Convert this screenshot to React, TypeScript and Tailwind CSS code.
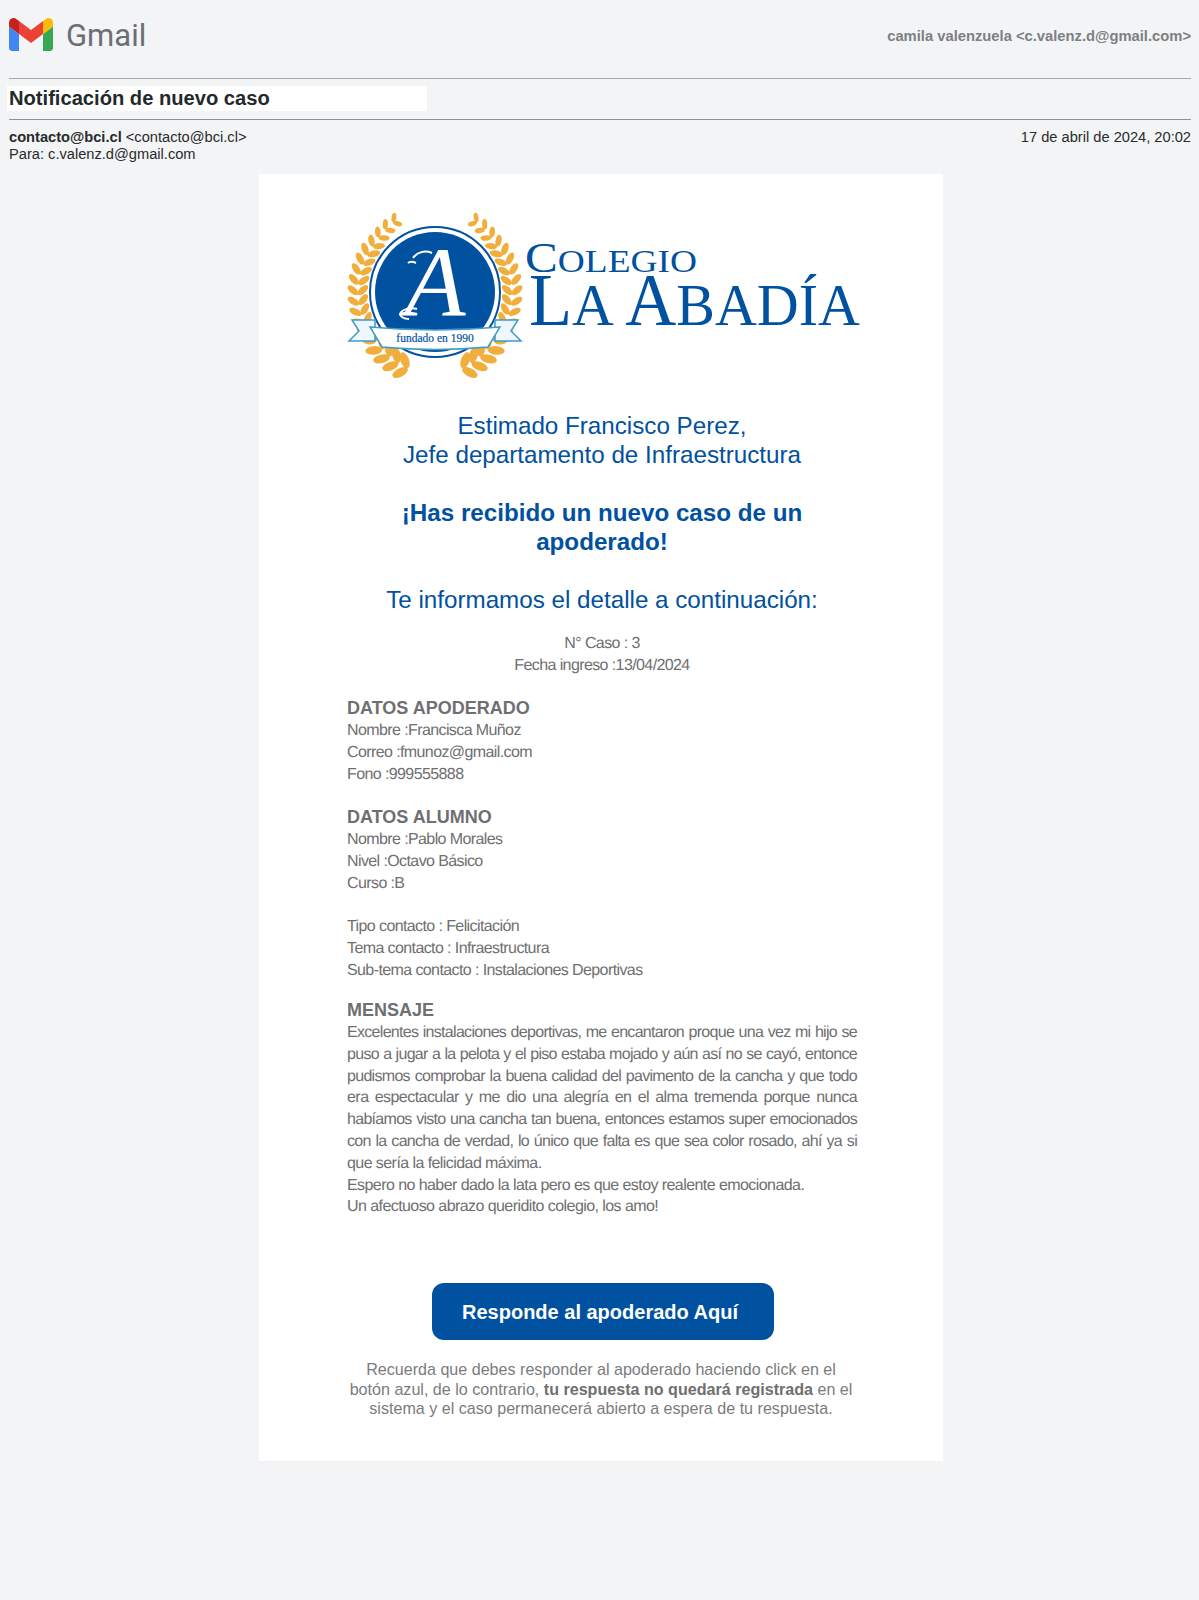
import React from "react";

const blue = "#0051a0";
const gold = "#f2ae3d";

function WreathSide() {
  const cx = 90, cy = 87;
  const pairs: React.ReactNode[] = [];
  for (let i = 0; i < 18; i++) {
    const a = 160 - i * 7.6;
    const t = (a * Math.PI) / 180;
    const rad = 77 + (i < 4 ? 4 - i : 0) + (i > 14 ? (i - 14) * 1.5 : 0);
    const s = i < 4 ? 1.3 : i > 13 ? 1 - (i - 13) * 0.07 : 1;
    pairs.push(
      <g key={i} transform={`translate(${cx + rad * Math.sin(t)} ${cy - rad * Math.cos(t)}) rotate(${a}) scale(${s})`}>
        <ellipse cx={0} cy={0} rx={6.5} ry={3.3} transform="translate(-4 -5) rotate(48)" fill={gold} />
        <ellipse cx={0} cy={0} rx={6.5} ry={3.3} transform="translate(-4 5) rotate(-48)" fill={gold} />
      </g>
    );
  }
  return <g>{pairs}</g>;
}

function Logo() {
  return (
    <svg width="520" height="180" viewBox="0 0 520 180" className="block overflow-visible">
      <WreathSide />
      <g transform="translate(180 0) scale(-1 1)">
        <WreathSide />
      </g>
      <circle cx="90" cy="87" r="65" fill="#fff" stroke={blue} strokeWidth="2" />
      <circle cx="90" cy="87" r="60" fill={blue} />
      <text x="90" y="111" textAnchor="middle" fontFamily="'Liberation Serif', serif" fontSize="100" fontStyle="italic" fill="#fff">A</text>
      <path d="M68 53c4-6 12-8 19-5M71 58c-4-2-6-2-8 0M72 104c-6-2-15 0-17 5 1 3 4 5 9 5" fill="none" stroke="#fff" strokeWidth="2" />
      <path d="M7 115h23v21H4l10-10Z" fill="#eef8fc" stroke="#3f9bc9" strokeWidth="1.5" />
      <path d="M173 115h-23v21h26l-10-10Z" fill="#eef8fc" stroke="#3f9bc9" strokeWidth="1.5" />
      <path d="M25 122l11 6v-6ZM155 122l-11 6v-6Z" fill={blue} />
      <path d="M25 122Q90 128 155 122L143 142Q90 147 37 142Z" fill="#fff" stroke="#3f9bc9" strokeWidth="1.5" />
      <text x="90" y="137" textAnchor="middle" fontFamily="'Liberation Serif', serif" fontSize="11.5" fill={blue} stroke={blue} strokeWidth="0.2">fundado en 1990</text>
      <text x="180" y="67" fontFamily="'Liberation Serif', serif" fontSize="32" fill={blue} textLength="172" lengthAdjust="spacingAndGlyphs">
        <tspan fontSize="42">C</tspan>OLEGIO
      </text>
      <text x="184" y="120" fontFamily="'Liberation Serif', serif" fontSize="60" fill={blue} textLength="331" lengthAdjust="spacingAndGlyphs">
        <tspan fontSize="73">L</tspan>A <tspan fontSize="73">A</tspan>BADÍA
      </text>
    </svg>
  );
}

function Line({ children }: { children: React.ReactNode }) {
  return <p className="h-[22px] text-[16px] leading-[22px] tracking-[-0.6px] [text-rendering:geometricPrecision] text-[#6f6f70] whitespace-nowrap">{children}</p>;
}

function SectionTitle({ children }: { children: React.ReactNode }) {
  return <p className="h-[23px] text-[18px] leading-[22px] font-bold text-[#6f6f70]">{children}</p>;
}

const tight = "block text-justify [text-align-last:justify] tracking-[-0.7px]";
const loose = "block text-justify [text-align-last:justify] tracking-[-0.55px]";

export default function App() {
  return (
    <div className="min-h-[1600px] bg-[#f3f4f6] font-['Liberation_Sans',Arial,sans-serif] overflow-hidden">
      <header className="flex items-start justify-between pl-[9px] pr-[8px] pt-[17px] h-[78px]">
        <div className="flex items-center gap-[13px]">
          <svg width="44" height="33" viewBox="52 42 88 66">
            <path fill="#4285f4" d="M58 108h14V74L52 59v43c0 3.32 2.69 6 6 6" />
            <path fill="#34a853" d="M120 108h14c3.32 0 6-2.69 6-6V59l-20 15" />
            <path fill="#fbbc04" d="M120 48v26l20-15v-8c0-7.42-8.47-11.65-14.4-7.2" />
            <path fill="#ea4335" d="M72 74V48l24 18 24-18v26L96 92" />
            <path fill="#c5221f" d="M52 51v8l20 15V48l-5.6-4.2c-5.94-4.45-14.4-.22-14.4 7.2" />
          </svg>
          <span className="mt-[2px] font-['Roboto',sans-serif] text-[31px] leading-[33px] text-[#6b6f73]">Gmail</span>
        </div>
        <span className="mt-[11px] text-[14.75px] leading-[17px] font-bold text-[#7d7f82]">camila valenzuela &lt;c.valenz.d@gmail.com&gt;</span>
      </header>
      <div className="ml-[9px] mr-[8px] border-t border-[#a8a9ab] h-[41px] pt-[7px]">
        <div className="-ml-[2px] w-[420px] h-[25px] bg-white pl-[2px] text-[20.15px] leading-[25px] font-bold text-[#1f2a2c]">Notificación de nuevo caso</div>
      </div>
      <div className="ml-[9px] mr-[8px] border-t border-[#8f9092] pt-[9px] h-[55px] flex justify-between text-[14.65px] leading-[17px] text-[#2a2b2d]">
        <div>
          <p><b className="font-bold">contacto@bci.cl</b> <span>&lt;contacto@bci.cl&gt;</span></p>
          <p>Para: c.valenz.d@gmail.com</p>
        </div>
        <div>17 de abril de 2024, 20:02</div>
      </div>

      <main className="ml-[259px] w-[684px] h-[1287px] bg-white flex flex-col">
        <div className="pl-[86px] pt-[31px] h-[237px]"><Logo /></div>

        <section className="pl-[2px] text-center text-[24.2px] leading-[29px]" style={{ color: blue }}>
          <p>Estimado Francisco Perez,</p>
          <p>Jefe departamento de Infraestructura</p>
          <p className="mt-[29px] font-bold">¡Has recibido un nuevo caso de un<br />apoderado!</p>
          <p className="mt-[29px]">Te informamos el detalle a continuación:</p>
        </section>

        <section className="mt-[19px] pl-[2px] text-center">
          <Line>N° Caso : 3</Line>
          <Line>Fecha ingreso :13/04/2024</Line>
        </section>

        <section className="px-[88px] mt-[20px]">
          <SectionTitle>DATOS APODERADO</SectionTitle>
          <Line>Nombre :Francisca Muñoz</Line>
          <Line>Correo :fmunoz@gmail.com</Line>
          <Line>Fono :999555888</Line>

          <div className="mt-[20px]">
            <SectionTitle>DATOS ALUMNO</SectionTitle>
            <Line>Nombre :Pablo Morales</Line>
            <Line>Nivel :Octavo Básico</Line>
            <Line>Curso :B</Line>
          </div>

          <div className="mt-[21px]">
            <Line>Tipo contacto : Felicitación</Line>
            <Line>Tema contacto : Infraestructura</Line>
            <Line>Sub-tema contacto : Instalaciones Deportivas</Line>
          </div>

          <div className="mt-[17px] w-[510px]">
            <SectionTitle>MENSAJE</SectionTitle>
            <p className="text-[16px] leading-[21.8px] text-[#6f6f70] [text-rendering:geometricPrecision]">
              <span className={tight}>Excelentes instalaciones deportivas, me encantaron proque una vez mi hijo se</span>
              <span className={tight}>puso a jugar a la pelota y el piso estaba mojado y aún así no se cayó, entonce</span>
              <span className={tight}>pudismos comprobar la buena calidad del pavimento de la cancha y que todo</span>
              <span className={loose}>era espectacular y me dio una alegría en el alma tremenda porque nunca</span>
              <span className={tight}>habíamos visto una cancha tan buena, entonces estamos super emocionados</span>
              <span className={tight}>con la cancha de verdad, lo único que falta es que sea color rosado, ahí ya si</span>
              <span className="block tracking-[-0.57px]">que sería la felicidad máxima.</span>
              <span className="block tracking-[-0.57px]">Espero no haber dado la lata pero es que estoy realente emocionada.</span>
              <span className="block tracking-[-0.57px]">Un afectuoso abrazo queridito colegio, los amo!</span>
            </p>
          </div>
        </section>

        <div className="mt-[65px] pl-[4px] flex justify-center">
          <a className="w-[342px] h-[57px] rounded-[12px] pr-[6px] flex items-center justify-center text-white text-[20px] font-bold" style={{ backgroundColor: blue }}>
            Responde al apoderado Aquí
          </a>
        </div>

        <p className="mt-[20px] text-center text-[16.1px] leading-[19.5px] text-[#7b7b7d]">
          Recuerda que debes responder al apoderado haciendo click en el<br />
          botón azul, de lo contrario, <b className="font-bold text-[#6f6f70]">tu respuesta no quedará registrada</b> en el<br />
          sistema y el caso permanecerá abierto a espera de tu respuesta.
        </p>
      </main>
    </div>
  );
}
